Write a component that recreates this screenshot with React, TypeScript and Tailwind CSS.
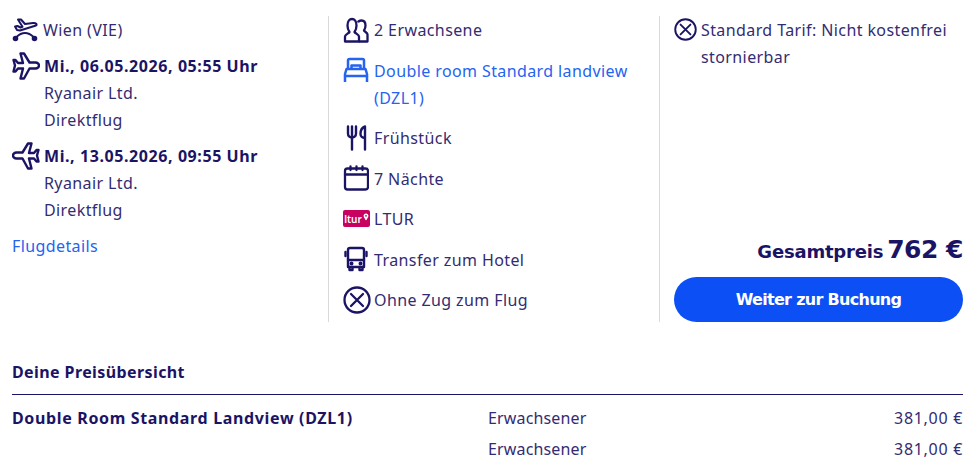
import type { ReactNode } from "react";

const IconDeparture = () => (
  <svg width="26" height="26" viewBox="0 0 26 26" fill="none" stroke="#1b1464" strokeWidth="2" strokeLinejoin="round" strokeLinecap="round">
    <path d="M6 2.500h3l4 4.500 8-1c3-.4 4.500 1.500 3 2.500L8 13.500l-3-.5-2-3.500 2.500-.5 3 1.500 2-.7L6 2.500z" />
    <path d="M4.500 20c2.500-2.500 5-4 8.500-4s6 1.500 8.500 4" />
    <circle cx="3.500" cy="21.500" r="1.800" fill="#1b1464" />
    <circle cx="22.500" cy="21.500" r="1.800" fill="#1b1464" />
  </svg>
);

const IconPlane = ({ flip = false }: { flip?: boolean }) => (
  <svg width="28" height="28" viewBox="0 0 28 28" fill="none" stroke="#1b1464" strokeWidth="2.400" strokeLinejoin="round" className={flip ? "-scale-x-100" : ""}>
    <path d="M8.500 1.500h3.500l5.500 9h6c2 0 3.500 1.500 3.500 3s-1.500 3-3.500 3h-6l-5.500 10H8.500L11 16.500H6L3.500 19.500H1.500l1.500-6-1.500-5.500h2L6 11h5L8.500 1.500z" />
  </svg>
);

const IconPeople = () => (
  <svg width="26" height="26" viewBox="0 0 26 26" fill="none" stroke="#1b1464" strokeWidth="2.300" strokeLinejoin="round">
    <path d="M2 24.500v-5c0-2 3.500-3 4.500-4.500-1.500-2-2-4-2-6.500C4.500 4.500 6.500 2 9 2s4.500 2.500 4.500 6.500c0 2.500-.5 4.500-2 6.500 1 1.500 4.500 2.500 4.500 4.500v5H2z" />
    <path d="M15 5.500c.5-1.500 2-2 3.500-2 2.500 0 4 2 4 5 0 2-.5 3.500-1.500 5 1 1.500 3.500 2 3.500 4v7H16" />
  </svg>
);

const IconBed = () => (
  <svg width="26" height="26" viewBox="0 0 26 26" fill="none" stroke="#2563f0" strokeWidth="2.500" strokeLinejoin="round">
    <path d="M5 12V3.500C5 2.500 5.800 2 6.500 2h13c.8 0 1.500.5 1.500 1.500V12" />
    <path d="M8.500 12V8.500h9V12" />
    <path d="M3.500 12h19l1.500 5v2H2v-2l1.500-5z" />
    <path d="M2 19v6M24 19v6" />
  </svg>
);

const IconCutlery = () => (
  <svg width="26" height="26" viewBox="0 0 26 26" fill="none" stroke="#1b1464" strokeWidth="2.400" strokeLinecap="round" strokeLinejoin="round">
    <path d="M5 1.500v7c0 2.500 1.500 4 4 4s4-1.500 4-4v-7" />
    <path d="M9 1.500v23" />
    <path d="M22 24.500v-23c-2.800 1-4.500 4-4.500 7.500 0 2.500 1.800 4 4.500 4" />
  </svg>
);

const IconCalendar = () => (
  <svg width="26" height="26" viewBox="0 0 26 26" fill="none" stroke="#1b1464" strokeWidth="2.300" strokeLinecap="round">
    <rect x="2" y="3.500" width="23" height="21" rx="2.500" />
    <path d="M2 9.500h23M7.500 1.500v3.500M13.500 1.500v3.500M19.500 1.500v3.500" />
  </svg>
);

const IconBus = () => (
  <svg width="26" height="26" viewBox="0 0 26 26" fill="none" stroke="#1b1464" strokeWidth="2.400" strokeLinejoin="round" strokeLinecap="round">
    <path d="M7 2h12c1.200 0 2 .8 2 2v17H5V4c0-1.200.8-2 2-2z" />
    <path d="M5 14h16" />
    <path d="M2.500 6v4M23.500 6v4" />
    <path d="M6.500 21v3h3v-3M16.500 21v3h3v-3" />
    <circle cx="8.500" cy="17.500" r=".8" fill="#1b1464" />
    <circle cx="17.500" cy="17.500" r=".8" fill="#1b1464" />
  </svg>
);

const IconCross = ({ size = 28 }: { size?: number }) => (
  <svg width={size} height={size} viewBox="0 0 28 28" fill="none" stroke="#1b1464" strokeWidth="2.300" strokeLinecap="round">
    <circle cx="14" cy="14" r="12.500" />
    <path d="M8 8l12 12M20 8L8 20" />
  </svg>
);

const LturLogo = () => (
  <div className="flex h-[17px] w-[27px] items-center justify-center gap-px rounded-[2px] bg-[#c8005f] text-[10px] font-semibold leading-none tracking-normal text-white">
    ltur
    <svg width="6" height="8" viewBox="0 0 6 8" className="-mt-1">
      <path d="M3 .5C1.600.5.600 1.500.600 2.800.600 4.500 3 7.500 3 7.500s2.400-3 2.400-4.700C5.400 1.500 4.400.5 3 .5z" fill="#fff" />
      <circle cx="3" cy="2.800" r=".9" fill="#c8005f" />
    </svg>
  </div>
);

const Row = ({ icon, children, blue }: { icon: ReactNode; children: ReactNode; blue?: boolean }) => (
  <div className={`flex ${blue ? "text-[#2563f0]" : ""}`}>
    <div className="flex h-[25px] w-[31px] shrink-0 items-center">{icon}</div>
    <div>{children}</div>
  </div>
);

const Flight = ({ icon, date }: { icon: ReactNode; date: string }) => (
  <div>
    <div className="flex">
      <div className="flex h-[25px] w-[32px] shrink-0 items-center">{icon}</div>
      <div className="font-bold tracking-[0.58px] text-[#1b1464]">{date}</div>
    </div>
    <div className="pl-[32px]">Ryanair Ltd.</div>
    <div className="pl-[32px]">Direktflug</div>
  </div>
);

export default function App() {
  return (
    <div className="h-[462px] w-[976px] overflow-hidden bg-white pl-3 pr-[13px] pt-4 font-['Noto_Sans',sans-serif] text-base leading-[27px] tracking-[0.4px] text-[#332c72]">
      <div className="grid h-[306px] grid-cols-[317px_331px_303px]">
        <div className="flex flex-col gap-[9px] border-r border-[#d9d9d9] pt-px">
          <Row icon={<IconDeparture />}>Wien (VIE)</Row>
          <Flight icon={<IconPlane />} date="Mi., 06.05.2026, 05:55 Uhr" />
          <Flight icon={<IconPlane flip />} date="Mi., 13.05.2026, 09:55 Uhr" />
          <a className="text-[#2563f0]">Flugdetails</a>
        </div>
        <div className="flex flex-col gap-[13.500px] border-r border-[#d9d9d9] pl-[14px] pt-px">
          <Row icon={<IconPeople />}>2 Erwachsene</Row>
          <Row icon={<IconBed />} blue>
            Double room Standard landview (DZL1)
          </Row>
          <Row icon={<IconCutlery />}>Frühstück</Row>
          <Row icon={<IconCalendar />}>7 Nächte</Row>
          <Row icon={<LturLogo />}>LTUR</Row>
          <Row icon={<IconBus />}>Transfer zum Hotel</Row>
          <Row icon={<IconCross />}>Ohne Zug zum Flug</Row>
        </div>
        <div className="flex flex-col pl-[14px] pt-px">
          <div className="flex">
            <div className="flex h-[25px] w-[27px] shrink-0 items-center">
              <IconCross size={23} />
            </div>
            <div>Standard Tarif: Nicht kostenfrei stornierbar</div>
          </div>
          <div className="mt-auto flex items-baseline justify-end gap-1 font-['DejaVu_Sans',sans-serif] font-bold text-[#1b1464]">
            <span className="text-[18px] tracking-[-0.2px]">Gesamtpreis</span>
            <span className="text-[25px] tracking-[-0.5px]">762 €</span>
          </div>
          <button className="mt-[12px] h-[45px] w-[289px] rounded-full bg-[#0b4ff5] font-['DejaVu_Sans',sans-serif] text-base font-bold tracking-[-0.7px] text-white">
            Weiter zur Buchung
          </button>
        </div>
      </div>
      <div className="mt-[37px] border-b border-[#1b1464] pb-[8px] font-bold tracking-[0.4px] text-[#1b1464]">Deine Preisübersicht</div>
      <div className="mt-[10px] grid grid-cols-[476px_1fr_auto] gap-y-[4px]">
        <div className="font-bold tracking-[0.65px] text-[#1b1464]">Double Room Standard Landview (DZL1)</div>
        <div className="tracking-[0.15px]">Erwachsener</div>
        <div className="tracking-[0.7px]">381,00 €</div>
        <div></div>
        <div className="tracking-[0.15px]">Erwachsener</div>
        <div className="tracking-[0.7px]">381,00 €</div>
      </div>
    </div>
  );
}
